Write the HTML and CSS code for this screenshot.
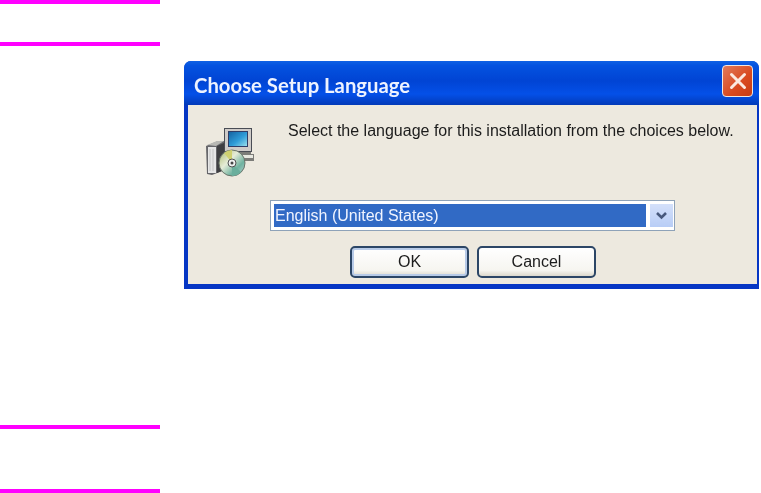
FILE: index.html
```html
<!DOCTYPE html>
<html lang="en">
<head>
    <meta charset="UTF-8">
    <meta name="viewport" content="width=device-width, initial-scale=1.0">
    <title>Choose Setup Language</title>
    <link rel="stylesheet" href="styles.css">
</head>
<body>
    <div class="rule"></div>
    <div class="rule rule-second"></div>
    <div class="dialog">
        <div class="title-bar">
            <span class="title-text">Choose Setup Language</span>
            <div class="close-button">
                <svg width="22" height="22" viewBox="0 0 22 22">
                    <path d="M4.5 4.5L17.5 17.5M17.5 4.5L4.5 17.5" stroke="#fbe9e0" stroke-width="3" stroke-linecap="round"/>
                </svg>
            </div>
        </div>
        <div class="dialog-body">
            <div class="message-row">
                <svg class="setup-icon" width="50" height="53" viewBox="205 125 50 53">
                    <defs>
                        <linearGradient id="screen" x1="0" y1="0" x2="1" y2="1">
                            <stop offset="0" stop-color="#14609f"/>
                            <stop offset="0.55" stop-color="#2f9cd8"/>
                            <stop offset="1" stop-color="#9fe4ee"/>
                        </linearGradient>
                        <linearGradient id="disc" x1="0" y1="0" x2="1" y2="1">
                            <stop offset="0" stop-color="#a8b868"/>
                            <stop offset="0.4" stop-color="#e6ecd8"/>
                            <stop offset="0.7" stop-color="#6fb2a0"/>
                            <stop offset="1" stop-color="#c0d4d4"/>
                        </linearGradient>
                    </defs>
                    <!-- box -->
                    <path d="M206 146L218 141L225 141V170L212 175L207 174Z" fill="#66666a"/>
                    <path d="M207 145L217 141H224L216 146Z" fill="#b8b8b4"/>
                    <path d="M208 147H216V173H208Z" fill="#e6e6e6"/>
                    <path d="M210 149V171M213 149V171" stroke="#c4c4c4"/>
                    <path d="M217 146L224 143V170L217 173Z" fill="#3f3f42"/>
                    <!-- monitor -->
                    <rect x="224.500" y="128.500" width="27" height="23" fill="#cfcbc8" stroke="#4a4d55"/>
                    <rect x="228.500" y="131.500" width="19" height="15" fill="url(#screen)" stroke="#2f3c66"/>
                    <path d="M226 152H251V154H254V161H240L226 156Z" fill="#7c7c78"/>
                    <rect x="240" y="155" width="13" height="3" fill="#e8e8e0"/>
                    <!-- cd -->
                    <circle cx="232" cy="163" r="13" fill="url(#disc)" stroke="#6a746a"/>
                    <path d="M232 163L224 153A13 13 0 0 1 232 150Z" fill="#cfd070"/>
                    <path d="M232 163L241 172A13 13 0 0 1 232 176Z" fill="#6aae9c"/>
                    <circle cx="232" cy="163" r="4" fill="#f0f0f0" stroke="#505050"/>
                    <circle cx="232" cy="163" r="1.500" fill="#444"/>
                </svg>
                <p class="message">Select the language for this installation from the choices below.</p>
            </div>
            <div class="select-box">
                <div class="select-value">English (United States)</div>
                <div class="select-arrow">
                    <svg width="13" height="10" viewBox="0 0 13 10">
                        <path d="M2 2L6.500 6.500L11 2" fill="none" stroke="#47587c" stroke-width="2.600"/>
                    </svg>
                </div>
            </div>
            <div class="button-row">
                <button type="button" class="xp-button default-button">OK</button>
                <button type="button" class="xp-button">Cancel</button>
            </div>
        </div>
    </div>
    <div class="rule rule-third"></div>
    <div class="rule rule-fourth"></div>
</body>
</html>
```

FILE: styles.css
```css
body, html {
    margin: 0;
    padding: 0;
    height: 493px;
    overflow: hidden;
    background-color: #fff;
    font-family: "Liberation Sans", Arial, sans-serif;
}

.rule {
    width: 160px;
    height: 4px;
    background-color: #ff00ff;
}

.rule-second {
    margin-top: 38px;
}

.rule-third {
    margin-top: 136px;
}

.rule-fourth {
    margin-top: 60px;
}

.dialog {
    width: 575px;
    height: 228px;
    margin: 15px 0 0 184px;
    box-sizing: border-box;
    padding: 0 2px 5px 4px;
    display: flex;
    flex-direction: column;
    background-color: #0636c4;
    border-radius: 7px 7px 0 0;
    filter: blur(0.5px);
}

.title-bar {
    height: 44px;
    flex-shrink: 0;
    margin: 0 -2px 0 -4px;
    padding: 0 6px 0 10px;
    display: flex;
    align-items: center;
    justify-content: space-between;
    border-radius: 7px 7px 0 0;
    background: linear-gradient(#0f62e4 0%, #0453e0 10%, #0144d4 45%, #0450e8 75%, #023ab8 100%);
}

.title-text {
    color: #eef3ff;
    font-family: Lato, "Liberation Sans", sans-serif;
    font-size: 20.3px;
    font-weight: 700;
    margin-top: 4px;
}

.close-button {
    width: 31px;
    height: 32px;
    box-sizing: border-box;
    margin-top: -5px;
    display: flex;
    align-items: center;
    justify-content: center;
    border: 1px solid #f0e6e0;
    border-radius: 4px;
    background: linear-gradient(135deg, #e07a5a, #d9491f 60%, #c83c14);
}

.dialog-body {
    flex: 1;
    background-color: #ede9df;
}

.message-row {
    display: flex;
    height: 95px;
}

.setup-icon {
    margin: 20px 0 0 17px;
}

.message {
    margin: 16px 0 0 33px;
    font-size: 16px;
    line-height: 20px;
    color: #1c1c1c;
    white-space: nowrap;
}

.select-box {
    width: 405px;
    height: 31px;
    margin-left: 82px;
    box-sizing: border-box;
    padding: 3px 1px 3px 3px;
    display: flex;
    border: 1px solid #8ea2b8;
    background-color: #fff;
}

.select-value {
    width: 372px;
    color: #f0f4ff;
    background-color: #316ac5;
    font-size: 16px;
    line-height: 23px;
    padding-left: 1px;
    box-sizing: border-box;
}

.select-arrow {
    width: 23px;
    margin-left: 4px;
    display: flex;
    align-items: center;
    justify-content: center;
    background: linear-gradient(#d4e0fa, #b8cdf6);
}

.button-row {
    display: flex;
    gap: 8px;
    margin: 15px 0 0 162px;
}

.xp-button {
    width: 119px;
    height: 32px;
    padding: 0;
    border: 2px solid #2c4666;
    border-radius: 5px;
    background: linear-gradient(#ffffff, #f6f5f0 80%, #dcd8cc);
    color: #1c1c1c;
    font-family: "Liberation Sans", Arial, sans-serif;
    font-size: 16px;
}

.default-button {
    box-shadow: inset 0 0 0 2px #b8cbe8;
}
```
